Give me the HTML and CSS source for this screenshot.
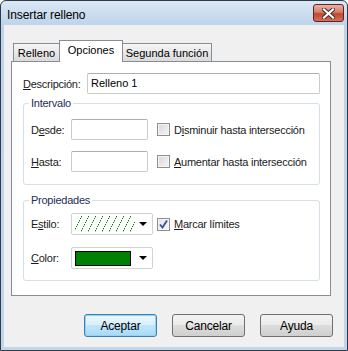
FILE: index.html
```html
<!DOCTYPE html>
<html lang="es">
<head>
    <meta charset="UTF-8">
    <title>Insertar relleno</title>
    <link rel="stylesheet" href="styles.css">
</head>
<body>
    <div class="window">
        <div class="titlebar">
            <span class="title">Insertar relleno</span>
            <div class="close">
                <svg width="13" height="11" viewBox="0 0 13 11">
                    <path d="M2 1.5 L11 9.5 M11 1.5 L2 9.5" stroke="#3b2a2a" stroke-width="4" stroke-linecap="square"/>
                    <path d="M2 1.5 L11 9.5 M11 1.5 L2 9.5" stroke="#ffffff" stroke-width="2.2" stroke-linecap="square"/>
                </svg>
            </div>
        </div>

        <div class="client">
            <div class="tabs">
                <div class="tab t1">Relleno</div>
                <div class="tab t2 active">Opciones</div>
                <div class="tab t3">Segunda función</div>
            </div>

            <div class="panel">
                <div class="row desc">
                    <label class="lbl wide"><u>D</u>escripción:</label>
                    <div class="textbox long">Relleno 1</div>
                </div>

                <fieldset class="group first">
                    <legend>Intervalo</legend>
                    <div class="row">
                        <label class="lbl">D<u>e</u>sde:</label>
                        <div class="textbox short"></div>
                        <label class="check"><span class="box"></span>D<u>i</u>sminuir hasta intersección</label>
                    </div>
                    <div class="row">
                        <label class="lbl"><u>H</u>asta:</label>
                        <div class="textbox short"></div>
                        <label class="check"><span class="box"></span><u>A</u>umentar hasta intersección</label>
                    </div>
                </fieldset>

                <fieldset class="group second">
                    <legend>Propiedades</legend>
                    <div class="row">
                        <label class="lbl">E<u>s</u>tilo:</label>
                        <div class="combo">
                            <svg class="hatch" width="60" height="16" viewBox="0 0 60 16" shape-rendering="crispEdges">
                                <defs>
                                    <pattern id="diag" width="7" height="14" patternUnits="userSpaceOnUse">
                                        <g fill="#008000">
                                            <rect x="6" y="0" width="1" height="1"/>
                                            <rect x="5" y="2" width="1" height="1"/>
                                            <rect x="4" y="4" width="1" height="1"/>
                                            <rect x="3" y="6" width="1" height="1"/>
                                            <rect x="2" y="8" width="1" height="1"/>
                                            <rect x="1" y="10" width="1" height="1"/>
                                            <rect x="0" y="12" width="1" height="1"/>
                                            <rect x="6" y="1" width="1" height="1" opacity="0.35"/>
                                            <rect x="4" y="5" width="1" height="1" opacity="0.35"/>
                                            <rect x="2" y="9" width="1" height="1" opacity="0.35"/>
                                            <rect x="0" y="13" width="1" height="1" opacity="0.35"/>
                                        </g>
                                    </pattern>
                                </defs>
                                <rect x="0" y="0" width="60" height="16" fill="url(#diag)"/>
                            </svg>
                            <span class="arrow"></span>
                        </div>
                        <label class="check near"><span class="box checked">
                            <svg width="11" height="11" viewBox="0 0 11 11">
                                <path d="M2 5.5 L4.5 8.5 L9 1.5" fill="none" stroke="#3d4f8c" stroke-width="1.8"/>
                            </svg>
                        </span><u>M</u>arcar límites</label>
                    </div>
                    <div class="row">
                        <label class="lbl"><u>C</u>olor:</label>
                        <div class="combo">
                            <span class="swatch"></span>
                            <span class="arrow"></span>
                        </div>
                    </div>
                </fieldset>
            </div>

            <div class="buttons">
                <button class="btn default">Aceptar</button>
                <button class="btn">Cancelar</button>
                <button class="btn">Ayuda</button>
            </div>
        </div>
    </div>
</body>
</html>
```

FILE: styles.css
```css
* {
    box-sizing: border-box;
}
body {
    margin: 0;
    font-family: "Liberation Sans", Arial, sans-serif;
    font-size: 11px;
    color: #000000;
    background-color: #ffffff;
}
.window {
    width: 348px;
    height: 351px;
    border: 1px solid #2f3b48;
    border-radius: 6px 6px 0 0;
    background: linear-gradient(#dbe8f5, #bed4ea 24px, #c2d6eb);
    padding: 0 3px 3px 3px;
    display: flex;
    flex-direction: column;
}
.titlebar {
    height: 24px;
    display: flex;
    align-items: flex-start;
    justify-content: space-between;
    padding-left: 3px;
}
.title {
    font-size: 12px;
    line-height: 14px;
    margin-top: 7px;
    letter-spacing: -0.1px;
}
.close {
    width: 31px;
    height: 18px;
    margin-top: 3px;
    border: 1px solid #5e2323;
    border-radius: 3px;
    background: linear-gradient(#eab3a6, #d77b6a 45%, #c2472f 55%, #d27158);
    display: flex;
    align-items: center;
    justify-content: center;
}
.client {
    flex: 1;
    background-color: #f0f0f0;
    padding: 16px 11px 0 7px;
    display: flex;
    flex-direction: column;
}
.tabs {
    height: 20px;
    display: flex;
    align-items: flex-end;
    padding-left: 2px;
}
.tab {
    height: 18px;
    padding-top: 3px;
    border: 1px solid #898c95;
    border-bottom: none;
    background: linear-gradient(#f6f6f6, #e8e8e8 50%, #dadada);
    line-height: 13px;
    text-align: center;
}
.tab + .tab {
    margin-left: -1px;
}
.t1 {
    width: 47px;
}
.t2 {
    width: 64px;
}
.t3 {
    width: 90px;
}
.tab.active {
    height: 22px;
    margin-bottom: -1px;
    padding-top: 3px;
    background: #ffffff;
    position: relative;
    z-index: 1;
}
.panel {
    width: 320px;
    height: 235px;
    border: 1px solid #898c95;
    background-color: #ffffff;
    padding: 11px 10px 0 11px;
    color: #1b1b1b;
    letter-spacing: -0.25px;
}
.row {
    display: flex;
    align-items: center;
    height: 21px;
}
.lbl {
    width: 40px;
    flex-shrink: 0;
}
.lbl.wide {
    width: 64px;
}
.textbox {
    height: 21px;
    border: 1px solid #c6cbd3;
    border-top-color: #abadb3;
    border-radius: 2px;
    background-color: #ffffff;
    padding: 3px 3px;
    line-height: 13px;
    color: #000000;
    letter-spacing: 0;
}
.textbox.long {
    width: 233px;
}
.textbox.short {
    width: 77px;
}
.group {
    margin: 3px 0 0 0;
    border: 1px solid #d5dfe5;
    border-radius: 3px;
    padding: 0 0 12px 7px;
    min-width: 0;
}
.group.second {
    margin-top: 9px;
    padding-bottom: 11px;
}
legend {
    padding: 0 2px;
    margin-left: -2px;
    line-height: 13px;
    color: #1e2d5a;
}
.group.first .row {
    margin-top: 11px;
}
.group.first .row:first-of-type {
    margin-top: 9px;
}
.group.second .row {
    height: 22px;
    margin-top: 12px;
}
.group.second .row:first-of-type {
    margin-top: 6px;
}
.check {
    display: flex;
    align-items: center;
    margin-left: 9px;
}
.check.near {
    margin-left: 4px;
}
.box {
    width: 13px;
    height: 13px;
    margin-right: 4px;
    border: 1px solid #8e8f8f;
    background: linear-gradient(135deg, #d8d8d8, #f6f6f6);
    box-shadow: inset 0 0 0 1px #f4f4f4;
    display: flex;
    align-items: center;
    justify-content: center;
}
.box.checked {
    background: linear-gradient(135deg, #dfe4ee, #f6f7fa);
}
.combo {
    width: 82px;
    height: 22px;
    border: 1px solid #d2d2d2;
    border-radius: 2px;
    background-color: #ffffff;
    display: flex;
    align-items: center;
    padding-left: 3px;
}
.hatch {
    display: block;
}
.swatch {
    width: 56px;
    height: 15px;
    border: 1px solid #000000;
    background-color: #008000;
}
.arrow {
    margin-left: auto;
    margin-right: 5px;
    width: 0;
    height: 0;
    border-left: 4px solid transparent;
    border-right: 4px solid transparent;
    border-top: 4px solid #000000;
}
.buttons {
    display: flex;
    justify-content: flex-end;
    gap: 15px;
    margin-top: 18px;
}
.btn {
    width: 73px;
    height: 23px;
    border: 1px solid #707070;
    border-radius: 3px;
    background: linear-gradient(#f2f2f2, #ebebeb 50%, #dddddd 50%, #cfcfcf);
    font-family: "Liberation Sans", Arial, sans-serif;
    font-size: 12px;
    letter-spacing: -0.2px;
    color: #000000;
    padding: 0;
}
.btn.default {
    border-color: #3c7fb1;
    background: linear-gradient(#eaf6fd, #d9f0fc 50%, #bee6fd 50%, #a7d9f5);
    box-shadow: inset 0 0 0 1px #98d1ef;
}
```
